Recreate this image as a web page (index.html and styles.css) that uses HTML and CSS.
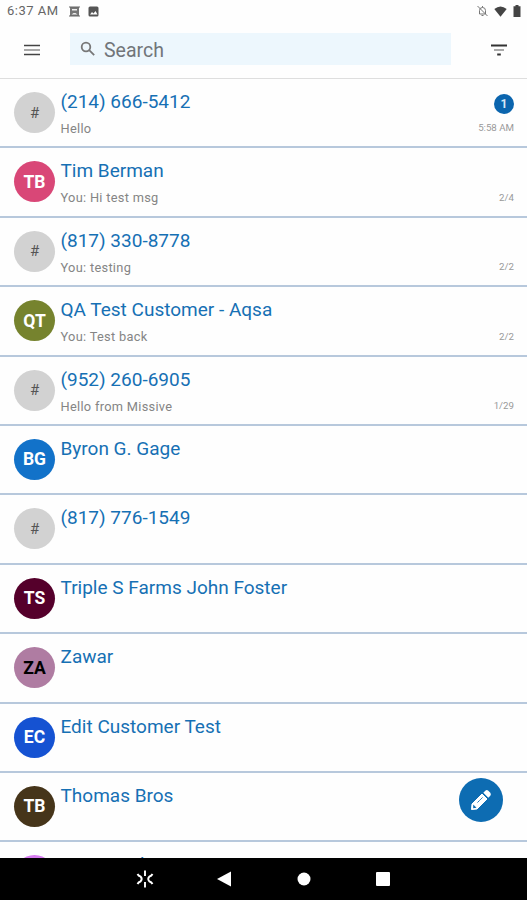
FILE: index.html
```html
<!DOCTYPE html>
<html lang="en">
<head>
    <meta charset="UTF-8">
    <meta name="viewport" content="width=device-width, initial-scale=1.0">
    <title>Messages</title>
    <link rel="stylesheet" href="styles.css">
</head>
<body>
    <div class="status-bar">
        <span class="clock">6:37 AM</span>
        <svg class="status-pic" width="11" height="11" viewBox="0 0 11 11">
            <path d="M1 1h9v9H1z" fill="#777"/>
            <path d="M3 3h5v1.500H3zM2.500 8.500l2-1.500h2l2 1.500z" fill="#eee"/>
            <path d="M0 1h11M0 10h11" stroke="#666"/>
        </svg>
        <svg class="status-pic" width="11" height="11" viewBox="0 0 11 11">
            <rect x="0.500" y="0.500" width="10" height="10" rx="1.500" fill="#555"/>
            <path d="M2 8.500l2-2.500 1.500 1.500 2-2.500 2 3.500z" fill="#fff"/>
        </svg>
        <div class="status-right">
            <svg width="11" height="12" viewBox="0 0 11 12" fill="none" stroke="#777">
                <path d="M2.500 9V5.500a3 3 0 0 1 6 0V9zM5.500 1v1.500M4.500 10.500h2M.5 1l10 10"/>
            </svg>
            <svg width="13" height="11" viewBox="0 0 13 11"><path d="M0.300 3Q6.500-2 12.700 3L6.500 10.700z" fill="#444"/></svg>
            <svg width="8" height="12" viewBox="0 0 8 12"><path d="M2.500 0h3v1.300h2V12h-7V1.300h2z" fill="#444"/></svg>
        </div>
    </div>
    <div class="toolbar">
        <svg class="menu" width="16" height="12" viewBox="0 0 16 12">
            <path d="M0 1.500h16M0 10.500h16" stroke="#444" stroke-width="1.500"/>
            <path d="M0 6h16" stroke="#999" stroke-width="1.700"/>
        </svg>
        <div class="search">
            <svg width="16" height="16" viewBox="0 0 16 16" fill="none" stroke="#777" stroke-width="1.800">
                <circle cx="6" cy="6" r="4.300"/>
                <path d="M9.200 9.200l5 5"/>
            </svg>
            <span>Search</span>
        </div>
        <svg class="filter" width="16" height="12" viewBox="0 0 16 12">
            <path d="M0 1.500h16M6.200 10.500h3.600" stroke="#333" stroke-width="1.800"/>
            <path d="M3 6h10" stroke="#aaa" stroke-width="2"/>
        </svg>
    </div>
    <div class="list">
        <div class="row">
            <div class="avatar number">#</div>
            <div class="text"><div class="name">(214) 666-5412</div><div class="msg">Hello</div></div>
            <div class="side"><span class="badge">1</span><span class="date">5:58 AM</span></div>
        </div>
        <div class="row">
            <div class="avatar pink">TB</div>
            <div class="text"><div class="name">Tim Berman</div><div class="msg">You: Hi test msg</div></div>
            <div class="side"><span class="date">2/4</span></div>
        </div>
        <div class="row">
            <div class="avatar number">#</div>
            <div class="text"><div class="name">(817) 330-8778</div><div class="msg">You: testing</div></div>
            <div class="side"><span class="date">2/2</span></div>
        </div>
        <div class="row">
            <div class="avatar olive">QT</div>
            <div class="text"><div class="name">QA Test Customer - Aqsa</div><div class="msg">You: Test back</div></div>
            <div class="side"><span class="date">2/2</span></div>
        </div>
        <div class="row">
            <div class="avatar number">#</div>
            <div class="text"><div class="name">(952) 260-6905</div><div class="msg">Hello from Missive</div></div>
            <div class="side"><span class="date">1/29</span></div>
        </div>
        <div class="row">
            <div class="avatar blue">BG</div>
            <div class="text"><div class="name">Byron G. Gage</div></div>
        </div>
        <div class="row">
            <div class="avatar number">#</div>
            <div class="text"><div class="name">(817) 776-1549</div></div>
        </div>
        <div class="row">
            <div class="avatar wine">TS</div>
            <div class="text"><div class="name">Triple S Farms John Foster</div></div>
        </div>
        <div class="row">
            <div class="avatar mauve">ZA</div>
            <div class="text"><div class="name">Zawar</div></div>
        </div>
        <div class="row">
            <div class="avatar royal">EC</div>
            <div class="text"><div class="name">Edit Customer Test</div></div>
        </div>
        <div class="row">
            <div class="avatar brown">TB</div>
            <div class="text"><div class="name">Thomas Bros</div></div>
        </div>
        <div class="row">
            <div class="avatar violet"></div>
            <div class="text"><div class="name">Green Fish</div></div>
        </div>
    </div>
    <div class="compose">
        <svg width="22" height="22" viewBox="0 0 22 22">
            <path d="M1.500 20.500l.5-5.500L12 5l5 5L7 20z" fill="#fff" stroke="#fff" stroke-linejoin="round"/>
            <path d="M13.300 3.700l2-2q1.500-1.200 3 0l2 2q1.200 1.500 0 3l-2 2z" fill="#fff"/>
            <path d="M7.500 13.500l5-5" stroke="#0d6cb2" stroke-width="1" stroke-dasharray="2 .6"/>
            <path d="M3.200 15.500l3.300 3.300-3.300.4z" fill="#0d6cb2"/>
        </svg>
    </div>
    <div class="nav-bar">
        <svg width="18" height="18" viewBox="0 0 18 18" fill="none" stroke="#fff" stroke-width="1.900">
            <path d="M9 .5v5.500M9 12v5.500M1.500 4q1 2 3 2.500 2.500 2.500 0 5-2 .5-3 2.500M16.500 4q-1 2-3 2.500-2.500 2.500 0 5 2 .5 3 2.500"/>
        </svg>
        <svg class="back" width="14" height="16" viewBox="0 0 14 16"><path d="M0 8L14 .5v15z" fill="#fff"/></svg>
        <svg width="14" height="14" viewBox="0 0 14 14"><circle cx="7" cy="7" r="6.500" fill="#fff"/></svg>
        <svg width="14" height="14" viewBox="0 0 14 14"><rect width="14" height="14" rx="1" fill="#fff"/></svg>
    </div>
</body>
</html>
```
FILE: styles.css
```css
body{
    margin: 0;
    height: 900px;
    display: flex;
    flex-direction: column;
    overflow: hidden;
    background-color: #fefefe;
    font-family: Roboto, "Liberation Sans", sans-serif;
}
svg {
    display: block;
    flex: none;
}
.status-bar {
    height: 22px;
    box-sizing: border-box;
    padding: 0 6px 0 7px;
    display: flex;
    align-items: center;
}
.clock {
    width: 62px;
    font-size: 13px;
    letter-spacing: 0.5px;
    line-height: 20px;
    padding-bottom: 1px;
    color: #666;
}
.status-pic {
    margin-right: 8px;
}
.status-right {
    margin-left: auto;
    display: flex;
    align-items: center;
    gap: 6px;
}
.toolbar {
    height: 57px;
    box-sizing: border-box;
    padding: 11px 19px 0 24px;
    display: flex;
    border-bottom: 1px solid #dedede;
}
.menu, .filter {
    margin-top: 11px;
}
.search {
    width: 381px;
    height: 32px;
    box-sizing: border-box;
    margin: 0 40px 0 30px;
    padding-left: 10px;
    display: flex;
    align-items: center;
    gap: 8px;
    background-color: #edf7fd;
    color: #717579;
    font-size: 19.5px;
}
.search span {
    padding-top: 2px;
}
.list {
    flex: 1;
    min-height: 0;
    overflow: hidden;
}
.row {
    height: 69.4px;
    box-sizing: border-box;
    padding: 0 13px 0 14px;
    display: flex;
    border-bottom: 2px solid #b7c8dc;
}
.avatar {
    width: 41px;
    height: 41px;
    margin-top: 13px;
    border-radius: 50%;
    display: flex;
    align-items: center;
    justify-content: center;
    color: white;
    font-size: 17.5px;
    font-weight: 700;
}
.number {
    background-color: #d2d2d2;
    color: #555;
    font-size: 15px;
    font-weight: 400;
}
.pink {
    background-color: #d94777;
}
.olive {
    background-color: #76832e;
}
.blue {
    background-color: #1272c9;
}
.wine {
    background-color: #55002b;
}
.mauve {
    background-color: #af7ca2;
    color: black;
}
.royal {
    background-color: #1552d2;
}
.brown {
    background-color: #46351a;
}
.violet {
    background-color: #d77cf0;
}
.text {
    flex: 1;
    margin-left: 5.5px;
    padding-top: 11px;
}
.name {
    font-size: 19px;
    line-height: 24px;
    color: #1670b4;
    white-space: nowrap;
}
.msg {
    margin-top: 7px;
    font-size: 12.8px;
    line-height: 16px;
    letter-spacing: 0.3px;
    color: #858585;
}
.side {
    padding-top: 15px;
    display: flex;
    flex-direction: column;
    align-items: flex-end;
}
.badge {
    width: 20px;
    height: 20px;
    border-radius: 50%;
    background-color: #0b65ae;
    color: #d5e8f7;
    font-size: 12px;
    font-weight: 700;
    line-height: 20px;
    text-align: center;
}
.date {
    margin-top: auto;
    margin-bottom: 12px;
    font-size: 9.7px;
    line-height: 12px;
    color: #999;
}
.compose {
    position: absolute;
    left: 459px;
    top: 778px;
    width: 44px;
    height: 44px;
    border-radius: 50%;
    background-color: #0d6cb2;
    display: flex;
    align-items: center;
    justify-content: center;
}
.nav-bar {
    height: 42px;
    box-sizing: border-box;
    padding: 0 137px 0 136px;
    display: flex;
    align-items: center;
    justify-content: space-between;
    background-color: black;
}
.back {
    margin-right: 2px;
    margin-left: -2px;
}
```
